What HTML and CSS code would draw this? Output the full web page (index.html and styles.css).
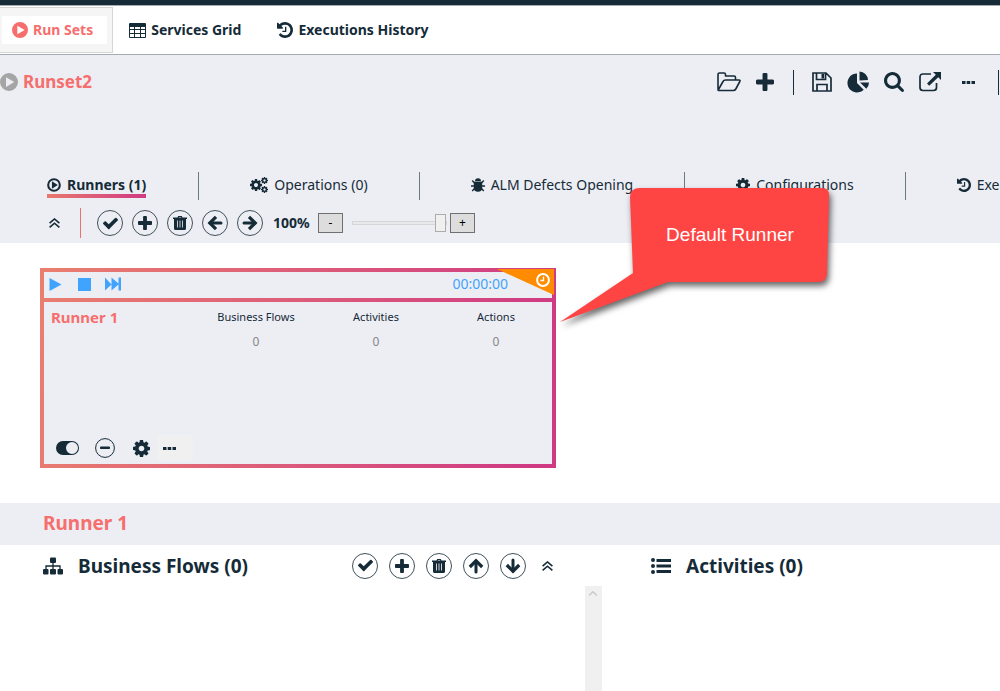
FILE: index.html
```html
<!DOCTYPE html>
<html lang="en">
<head>
<meta charset="utf-8">
<meta name="viewport" content="width=device-width, initial-scale=1">
<title>Run Sets</title>
<link rel="stylesheet" href="styles.css">
</head>
<body>
<svg class="sprite" aria-hidden="true">
  <symbol id="play-circle" viewBox="0 0 24 24"><path fill-rule="evenodd" d="M12 0a12 12 0 1 0 0 24 12 12 0 0 0 0-24zM8 5.500v13L19 12z"/></symbol>
  <symbol id="play-ring" viewBox="0 0 24 24"><circle cx="12" cy="12" r="10" fill="none" stroke="currentColor" stroke-width="3.500"/><path d="M8.500 5.500v13L18.500 12z"/></symbol>
  <symbol id="table" viewBox="0 0 17 15"><path fill-rule="evenodd" d="M1 0h15a1 1 0 0 1 1 1v13a1 1 0 0 1-1 1H1a1 1 0 0 1-1-1V1a1 1 0 0 1 1-1zM1 4v2h4V4zM6 4v2h5V4zM12 4v2h4V4zM1 7v3h4V7zM6 7v3h5V7zM12 7v3h4V7zM1 11v3h4v-3zM6 11v3h5v-3zM12 11v3h4v-3z"/></symbol>
  <symbol id="history" viewBox="128 128 1536 1536"><path d="M1664 896q0 156-61 298t-164 245-245 164-298 61q-172 0-327-72.500t-264-204.500q-7-10-6.500-22.500t8.500-20.500l137-138q10-9 25-9 16 2 23 12 73 95 179 147t225 52q104 0 198.500-40.500t163.500-109.500 109.500-163.500 40.500-198.500-40.500-198.500-109.500-163.500-163.500-109.500-198.500-40.500q-98 0-188 35.500t-160 101.500l137 138q31 30 14 69-17 40-59 40h-448q-26 0-45-19t-19-45v-448q0-42 40-59 39-17 69 14l130 129q107-101 244.500-156.500t284.500-55.500q156 0 298 61t245 164 164 245 61 298zm-640-288v448q0 14-9 23t-23 9h-320q-14 0-23-9t-9-23v-64q0-14 9-23t23-9h224v-352q0-14 9-23t23-9h64q14 0 23 9t9 23z"/></symbol>
  <symbol id="folder" viewBox="0 0 24 20"><path fill="none" stroke="currentColor" stroke-width="1.600" stroke-linejoin="round" d="M1 17.500V2.500Q1 1 2.500 1H7q1.500 0 1.500 1.500V4h8.500q1.500 0 1.500 1.500V8M1.200 18 6 9.500Q6.800 8 8.500 8H22q1.500 0 .8 1.500l-4 7.500q-.8 1.500-2.500 1.500H2q-1 0-.8-.5z"/></symbol>
  <symbol id="plus" viewBox="192 192 1408 1408"><path d="M1600 800v192q0 40-28 68t-68 28h-416v416q0 40-28 68t-68 28H800q-40 0-68-28t-28-68v-416H288q-40 0-68-28t-28-68V800q0-40 28-68t68-28h416V288q0-40 28-68t68-28h192q40 0 68 28t28 68v416h416q40 0 68 28t28 68z"/></symbol>
  <symbol id="save" viewBox="0 0 20 20"><path fill="none" stroke="currentColor" stroke-width="1.700" d="M1 1h13l5 5v13H1zM5 19v-6.500h10V19M4.500 1v6.500h9V1"/><path d="M9.500 2H12v4.500H9.500z"/></symbol>
  <symbol id="pie" viewBox="0 0 22 21"><path d="M10 2v9.500l6.700 6.700A9.500 9.500 0 1 1 10 2zM12.500 0A9 9 0 0 1 21 8.500l-8.500.5zM13 11h9q0 3.500-2.700 6.300z"/></symbol>
  <symbol id="search" viewBox="64 128 1664 1664"><path d="M1216 832q0-185-131.500-316.500t-316.500-131.500-316.500 131.500-131.500 316.500 131.500 316.500 316.500 131.500 316.500-131.500 131.500-316.500zm512 832q0 52-38 90t-90 38q-54 0-90-38l-343-342q-179 124-399 124-143 0-273.500-55.500t-225-150-150-225-55.500-273.500 55.500-273.500 150-225 225-150 273.500-55.500 273.500 55.500 225 150 150 225 55.500 273.500q0 220-124 399l343 343q37 37 37 90z"/></symbol>
  <symbol id="external" viewBox="0 0 22 20"><path fill="none" stroke="currentColor" stroke-width="1.700" d="M12 2H4Q1 2 1 5v10.500q0 3 3 3h10.500q3 0 3-3V11"/><path d="M14 0h8v8l-2.800-2.800-9 8.500L8 11.500l8.800-8.700z"/></symbol>
  <symbol id="dots" viewBox="0 0 13 4"><path d="M0 .5h3.500v3H0zM4.700.5h3.500v3H4.700zM9.500.5H13v3H9.500z"/></symbol>
  <symbol id="cog" viewBox="128 128 1536 1536"><path d="M1152 896q0-106-75-181t-181-75-181 75-75 181 75 181 181 75 181-75 75-181zm512-109v222q0 12-8 23t-20 13l-185 28q-19 54-39 91 35 50 107 138 10 12 10 25t-9 23q-27 37-99 108t-94 71q-12 0-26-9l-138-108q-44 23-91 38-16 136-29 186-7 28-36 28h-222q-14 0-24.500-8.500t-11.500-21.500l-28-184q-49-16-90-37l-141 107q-10 9-25 9-14 0-25-11-126-114-165-168-7-10-7-23 0-12 8-23 15-21 51-66.500t54-70.500q-27-50-41-99l-183-27q-13-2-21-12.500t-8-23.500v-222q0-12 8-23t19-13l186-28q14-46 39-92-40-57-107-138-10-12-10-24 0-10 9-23 26-36 98.500-107.500t94.500-71.500q13 0 26 10l138 107q44-23 91-38 16-136 29-186 7-28 36-28h222q14 0 24.500 8.500t11.500 21.500l28 184q49 16 90 37l142-107q9-9 24-9 13 0 25 10 129 119 165 170 7 8 7 22 0 12-8 23-15 21-51 66.500t-54 70.500q26 50 41 98l183 28q13 2 21 12.500t8 23.500z"/></symbol>
  <symbol id="cogs" viewBox="0 0 18 16"><use href="#cog" x="0" y="2" width="12" height="12"/><use href="#cog" x="11" y="0" width="7" height="7"/><use href="#cog" x="11" y="9" width="7" height="7"/></symbol>
  <symbol id="bug" viewBox="0 0 14 14"><path d="M4 3.300Q4 .3 7 .3t3 3zM2.800 3.800h8.400v6q0 3.900-4.200 3.900t-4.200-3.900z"/><path fill="none" stroke="currentColor" stroke-width="1.400" d="M4 5.500 1.200 2.500M10 5.500l2.800-3M4 8H0M10 8h4M4 10l-2.800 3M10 10l2.800 3"/></symbol>
  <symbol id="collapse" viewBox="0 0 11 10"><path fill="none" stroke="currentColor" stroke-width="1.600" d="M.6 5.200 5.500 1l4.900 4.200M.6 9.400l4.900-4.200 4.900 4.200"/></symbol>
  <symbol id="check" viewBox="121 160 1550 1550"><path d="M1671 566q0 40-28 68l-724 724-136 136q-28 28-68 28t-68-28l-136-136-362-362q-28-28-28-68t28-68l136-136q28-28 68-28t68 28l294 295 656-657q28-28 68-28t68 28l136 136q28 28 28 68z"/></symbol>
  <symbol id="trash" viewBox="0 0 14 14"><path fill-rule="evenodd" d="M4.500 1.500 5.200 0h3.600l.7 1.500H14V3h-1v9.500q0 1.500-1.500 1.500h-9Q1 14 1 12.500V3H0V1.500zM6 1l-.3.500h2.600L8 1zM4 4.500v7h.8v-7zM6.600 4.500v7h.8v-7zM9.200 4.500v7h.8v-7z"/></symbol>
  <symbol id="arrow" viewBox="0 0 16 16"><path fill="none" stroke="currentColor" stroke-width="3" stroke-linejoin="round" stroke-linecap="round" d="M14 8H3"/><path fill="none" stroke="currentColor" stroke-width="3.200" d="M9 1.800 2.800 8 9 14.200"/></symbol>
  <symbol id="play" viewBox="0 0 12 13"><path d="M0 0v13l12-6.500z"/></symbol>
  <symbol id="stop" viewBox="0 0 13 13"><path d="M0 0h13v13H0z"/></symbol>
  <symbol id="skip" viewBox="0 0 16 13"><path d="M0 0v13l6.500-6zM6.500 0v13l7-6V13H16V0h-2.500v6z"/></symbol>
  <symbol id="clock" viewBox="0 0 14 14"><circle cx="7" cy="7" r="5.900" fill="none" stroke="currentColor" stroke-width="2"/><path fill="none" stroke="currentColor" stroke-width="1.300" d="M7.500 3.500v4h-3"/></symbol>
  <symbol id="toggle" viewBox="0 0 23 14"><path fill-rule="evenodd" d="M7 0h9a7 7 0 0 1 0 14H7A7 7 0 0 1 7 0zM16 1a6 6 0 1 0 0 12 6 6 0 0 0 0-12z"/></symbol>
  <symbol id="minus-ring" viewBox="0 0 20 20"><circle cx="10" cy="10" r="9.400" fill="none" stroke="currentColor" stroke-width="1"/><rect x="5" y="8.500" width="10" height="2.500" rx=".8"/></symbol>
  <symbol id="sitemap" viewBox="0 0 20 17"><rect x="7" y="0" width="6" height="5.500" rx="1"/><rect x="0" y="11.500" width="5.500" height="5.500" rx="1"/><rect x="7" y="11.500" width="6" height="5.500" rx="1"/><rect x="14.500" y="11.500" width="5.500" height="5.500" rx="1"/><path fill="none" stroke="currentColor" stroke-width="1.300" d="M10 5v7M3 12V8.500h14V12"/></symbol>
  <symbol id="list" viewBox="0 0 20 16"><circle cx="2" cy="2" r="2"/><circle cx="2" cy="8" r="2"/><circle cx="2" cy="14" r="2"/><path d="M5.500 1H20v3H5.500zM5.500 6.500H20v3H5.500zM5.500 12H20v3H5.500z"/></symbol>
</svg>

<nav class="main-nav" aria-label="Main">
  <a class="main-tab main-tab-active" href="#runsets" aria-current="page"><span class="main-tab-label"><svg class="i16"><use href="#play-circle"/></svg>Run Sets</span></a>
  <a class="main-tab" href="#grid"><svg class="i17"><use href="#table"/></svg>Services Grid</a>
  <a class="main-tab" href="#history-page"><svg class="i16"><use href="#history"/></svg>Executions History</a>
</nav>

<header class="runset">
  <div class="runset-bar">
    <h1 class="runset-name"><svg class="i18"><use href="#play-circle"/></svg>Runset2</h1>
    <div class="actions">
      <button class="action" aria-label="Open"><svg class="i24"><use href="#folder"/></svg></button>
      <button class="action" aria-label="Add"><svg class="i18"><use href="#plus"/></svg></button>
      <span class="action-divider"></span>
      <button class="action" aria-label="Save"><svg class="i20"><use href="#save"/></svg></button>
      <button class="action" aria-label="Report"><svg class="i22"><use href="#pie"/></svg></button>
      <button class="action" aria-label="Search"><svg class="i20"><use href="#search"/></svg></button>
      <button class="action" aria-label="Export"><svg class="i22"><use href="#external"/></svg></button>
      <button class="action action-more" aria-label="More"><svg class="i13"><use href="#dots"/></svg></button>
      <span class="action-divider"></span>
    </div>
  </div>

  <nav class="tabs" aria-label="Run set">
    <a class="tab tab-active" href="#runners"><span class="tab-label"><svg class="i14"><use href="#play-ring"/></svg>Runners (1)</span></a>
    <a class="tab" href="#operations"><span class="tab-label"><svg class="i18"><use href="#cogs"/></svg>Operations (0)</span></a>
    <a class="tab" href="#alm"><span class="tab-label"><svg class="i14"><use href="#bug"/></svg>ALM Defects Opening</span></a>
    <a class="tab" href="#config"><span class="tab-label"><svg class="i14"><use href="#cog"/></svg>Configurations</span></a>
    <a class="tab" href="#executions"><span class="tab-label"><svg class="i14"><use href="#history"/></svg>Executions History</span></a>
  </nav>

  <div class="toolbar">
    <button class="collapse" aria-label="Collapse"><svg class="i11"><use href="#collapse"/></svg></button>
    <div class="tools">
      <button class="round" aria-label="Select all"><svg class="i15"><use href="#check"/></svg></button>
      <button class="round" aria-label="Add runner"><svg class="i14"><use href="#plus"/></svg></button>
      <button class="round" aria-label="Delete runner"><svg class="i14"><use href="#trash"/></svg></button>
      <button class="round" aria-label="Move left"><svg class="i16"><use href="#arrow"/></svg></button>
      <button class="round" aria-label="Move right"><svg class="i16 turn-right"><use href="#arrow"/></svg></button>
    </div>
    <label class="zoom-label" for="zoom">100%</label>
    <button class="step" aria-label="Zoom out">-</button>
    <input class="zoom" id="zoom" type="range" min="0" max="100" value="100">
    <button class="step" aria-label="Zoom in">+</button>
  </div>
</header>

<main>
  <section class="canvas">
    <article class="card">
      <div class="card-controls">
        <button class="control" aria-label="Run"><svg class="i13"><use href="#play"/></svg></button>
        <button class="control" aria-label="Stop"><svg class="i13"><use href="#stop"/></svg></button>
        <button class="control" aria-label="Continue"><svg class="i16"><use href="#skip"/></svg></button>
        <time class="elapsed">00:00:00</time>
        <span class="ribbon"><svg class="i14"><use href="#clock"/></svg></span>
      </div>
      <div class="card-body">
        <h2 class="card-name">Runner 1</h2>
        <dl class="stats">
          <div class="stat"><dt>Business Flows</dt><dd>0</dd></div>
          <div class="stat"><dt>Activities</dt><dd>0</dd></div>
          <div class="stat"><dt>Actions</dt><dd>0</dd></div>
        </dl>
        <div class="card-foot">
          <button class="foot-button" aria-label="Active"><svg class="i23"><use href="#toggle"/></svg></button>
          <button class="foot-button" aria-label="Remove"><svg class="i20"><use href="#minus-ring"/></svg></button>
          <button class="foot-button" aria-label="Settings"><svg class="i17"><use href="#cog"/></svg></button>
          <button class="foot-button foot-more" aria-label="More"><svg class="i13"><use href="#dots"/></svg></button>
        </div>
      </div>
      <div class="callout">
        <svg class="callout-shape" viewBox="0 0 280 145" aria-hidden="true"><path d="M80 1H262Q270 1 269 10L267 86Q267 95 258 95H108L0 135 73 86 70 10Q70 1 80 1z"/></svg>
        <p class="callout-text">Default Runner</p>
      </div>
    </article>
  </section>

  <h2 class="selected">Runner 1</h2>

  <div class="panels">
    <section class="panel">
      <div class="panel-head">
        <h3 class="panel-title"><svg class="i20"><use href="#sitemap"/></svg>Business Flows (0)</h3>
        <div class="panel-tools">
          <button class="round" aria-label="Select all flows"><svg class="i15"><use href="#check"/></svg></button>
          <button class="round" aria-label="Add flow"><svg class="i14"><use href="#plus"/></svg></button>
          <button class="round" aria-label="Delete flow"><svg class="i14"><use href="#trash"/></svg></button>
          <button class="round" aria-label="Move up"><svg class="i16 turn-up"><use href="#arrow"/></svg></button>
          <button class="round" aria-label="Move down"><svg class="i16 turn-down"><use href="#arrow"/></svg></button>
        </div>
        <button class="collapse" aria-label="Collapse flows"><svg class="i11"><use href="#collapse"/></svg></button>
      </div>
      <div class="flow-list"><div class="scroll"><svg viewBox="0 0 8 5"><path d="M0 4.500 4 .8l4 3.700" fill="none" stroke="currentColor" stroke-width="1.500"/></svg></div></div>
    </section>
    <section class="panel panel-right">
      <div class="panel-head">
        <h3 class="panel-title"><svg class="i20"><use href="#list"/></svg>Activities (0)</h3>
      </div>
    </section>
  </div>
</main>
</body>
</html>
```
FILE: styles.css
```css
:root {
  --ink: #152b38;
  --coral: #f66e6d;
  --panel: #edeef4;
  --line: #a9abb2;
  --blue: #40a4ff;
}

* { box-sizing: border-box; }

body {
  margin: 0;
  min-height: 100vh;
  display: flex;
  flex-direction: column;
  overflow: hidden;
  background: #fff;
  color: var(--ink);
  font: 14px/20px "Noto Sans", "Open Sans", sans-serif;
  border-top: 5px solid var(--ink);
}

h1, h2, h3, p, dl, dd { margin: 0; }
a { color: inherit; text-decoration: none; white-space: nowrap; }
svg { flex: none; fill: currentColor; }
button {
  padding: 0;
  border: 0;
  background: none;
  color: inherit;
  font: inherit;
  display: flex;
  flex: none;
  align-items: center;
  justify-content: center;
}

.sprite { position: absolute; width: 0; height: 0; }
.i11 { width: 11px; height: 10px; }
.i13 { width: 13px; height: 13px; }
.i14 { width: 14px; height: 14px; }
.i15 { width: 15px; height: 15px; }
.i16 { width: 16px; height: 16px; }
.i17 { width: 17px; height: 17px; }
.i18 { width: 18px; height: 18px; }
.i20 { width: 20px; height: 20px; }
.i22 { width: 22px; height: 22px; }
.i23 { width: 23px; height: 14px; }
.i24 { width: 24px; height: 20px; }
.turn-up { transform: rotate(90deg); }
.turn-right { transform: rotate(180deg); }
.turn-down { transform: rotate(270deg); }

.main-nav {
  display: flex;
  align-items: stretch;
  height: 50px;
  padding: 1px 0;
  border-top: 1px solid var(--line);
  border-bottom: 1px solid var(--line);
  font-weight: 700;
}
.main-tab { display: flex; align-items: center; gap: 5px; padding: 0 16px; margin-right: 4px; }
.main-tab-active {
  margin: 0;
  padding: 0 5px 0 2px;
  background: #f5f5f5;
  border: 1px solid #d5d5d8;
  border-left: 0;
  color: var(--coral);
}
.main-tab-label { display: flex; align-items: center; gap: 5px; height: 28px; padding: 0 14px 0 10px; background: #fff; }

.runset { background: var(--panel); padding-bottom: 5px; overflow: hidden; }
.runset-bar { display: flex; justify-content: space-between; height: 117px; padding-top: 13px; }
.runset-name { display: flex; align-items: center; gap: 5px; height: 28px; color: var(--coral); font-size: 17px; line-height: 26px; }
.runset-name svg { color: #a5a5a5; }
.actions { display: flex; align-items: center; height: 28px; padding-right: 1px; overflow: hidden; }
.action { width: 36px; height: 28px; }
.action-more { width: 40px; }
.action-divider { width: 1px; height: 25px; margin: 0 10px; background: var(--ink); }
.action-divider:last-child { margin-right: 0; }

.tabs { display: flex; height: 28px; }
.tab { flex: none; padding: 0 51px; border-right: 1px solid #6d7a84; }
.tab:first-child { padding: 0 52px 0 47px; }
.tab:last-child { border: 0; }
.tab-label { display: flex; align-items: center; gap: 6px; height: 26px; }
.tab-active .tab-label {
  padding-top: 3px;
  font-weight: 700;
  border-bottom: 4px solid;
  border-image: linear-gradient(90deg, #e8796f, #cf3a83) 1;
}

.toolbar { display: flex; align-items: center; height: 38px; padding: 8px 0 0 48px; }
.collapse { width: 12px; height: 20px; }
.tools { display: flex; gap: 9px; margin-left: 20px; padding: 2px 10px 2px 16px; border-left: 1px solid #f0706f; }
.round { width: 26px; height: 26px; border: 1px solid #40505b; border-radius: 50%; }
.zoom-label { width: 45px; font-weight: 700; }
.step { width: 25px; height: 20px; border: 1px solid #707070; background: #ddd; color: #000; font-size: 12px; line-height: 18px; }
.zoom { appearance: none; width: 95px; height: 18px; margin: 0 3px 0 9px; background: none; }
.zoom::-webkit-slider-runnable-track { height: 4px; border: 1px solid #d6d6d6; background: #e7eaea; }
.zoom::-webkit-slider-thumb { appearance: none; width: 11px; height: 18px; margin-top: -8px; border: 1px solid #acacac; background: #f0f0f0; }

.canvas { padding: 25px 40px 35px; }
.card {
  position: relative;
  display: flex;
  flex-direction: column;
  gap: 4px;
  width: 516px;
  min-height: 200px;
  padding: 4px;
  background: linear-gradient(100deg, #ea7f6f, #cf3a83 95%);
}
.card-controls { position: relative; display: flex; align-items: center; height: 26px; padding: 0 44px 2px 3px; background: var(--panel); color: var(--blue); }
.control { width: 16px; height: 20px; margin-right: 13px; }
.elapsed { margin-left: auto; font-size: 14px; }
.ribbon {
  position: absolute;
  top: -3px;
  right: -2px;
  width: 57px;
  height: 26px;
  background: #ff8c00;
  clip-path: polygon(0 0, 100% 0, 100% 100%);
  color: #fff;
}
.ribbon svg { display: block; margin: 4px 0 0 39px; }
.card-body { flex: 1; display: grid; grid-template: 1fr auto / 152px 1fr; background: var(--panel); }
.card-name { padding: 5px 0 0 7px; color: var(--coral); font-size: 15px; line-height: 20px; }
.stats { display: flex; padding-top: 5px; font-size: 11px; line-height: 20px; text-align: center; white-space: nowrap; }
.stat { width: 120px; }
.stat dt { margin-bottom: 5px; }
.stat dd { color: #868686; font-size: 12px; }
.card-foot { grid-column: 1 / -1; display: flex; align-items: center; gap: 16px; height: 32px; padding-left: 12px; }
.foot-button { min-width: 20px; height: 26px; }
.foot-more { justify-content: flex-start; width: 36px; padding-left: 6px; margin-left: -10px; background: #f0f0f0; }

.callout { position: absolute; left: 520px; top: -81px; width: 280px; height: 145px; }
.callout-shape { display: block; width: 280px; height: 145px; overflow: visible; fill: #ff4444; filter: drop-shadow(2px 4px 3px rgb(0 0 0 / 60%)); }
.callout-text { position: absolute; left: 70px; right: 0; top: 36px; padding-right: 10px; color: #fff; font: 19px/24px "Liberation Sans", Arial, sans-serif; text-align: center; }

.selected { height: 42px; padding-left: 43px; background: var(--panel); color: var(--coral); font-size: 19px; line-height: 40px; }
main { flex: 1; display: flex; flex-direction: column; }
.panels { flex: 1; display: grid; grid-template-columns: 61fr 39fr; }
.panel { display: flex; flex-direction: column; }
.panel-head { display: flex; align-items: center; height: 41px; padding: 0 57px 0 43px; }
.panel-right .panel-head { padding-left: 41px; }
.panel-title { display: flex; align-items: center; gap: 15px; font-size: 19px; line-height: 24px; white-space: nowrap; }
.panel-tools { display: flex; gap: 11px; margin: 0 15px 0 auto; }
.flow-list { flex: 1; display: flex; justify-content: flex-end; padding-right: 8px; }
.scroll { width: 17px; padding: 5px 4px; background: #f0f0f0; color: #c9c9c9; }
.scroll svg { display: block; width: 8px; height: 5px; }
```
